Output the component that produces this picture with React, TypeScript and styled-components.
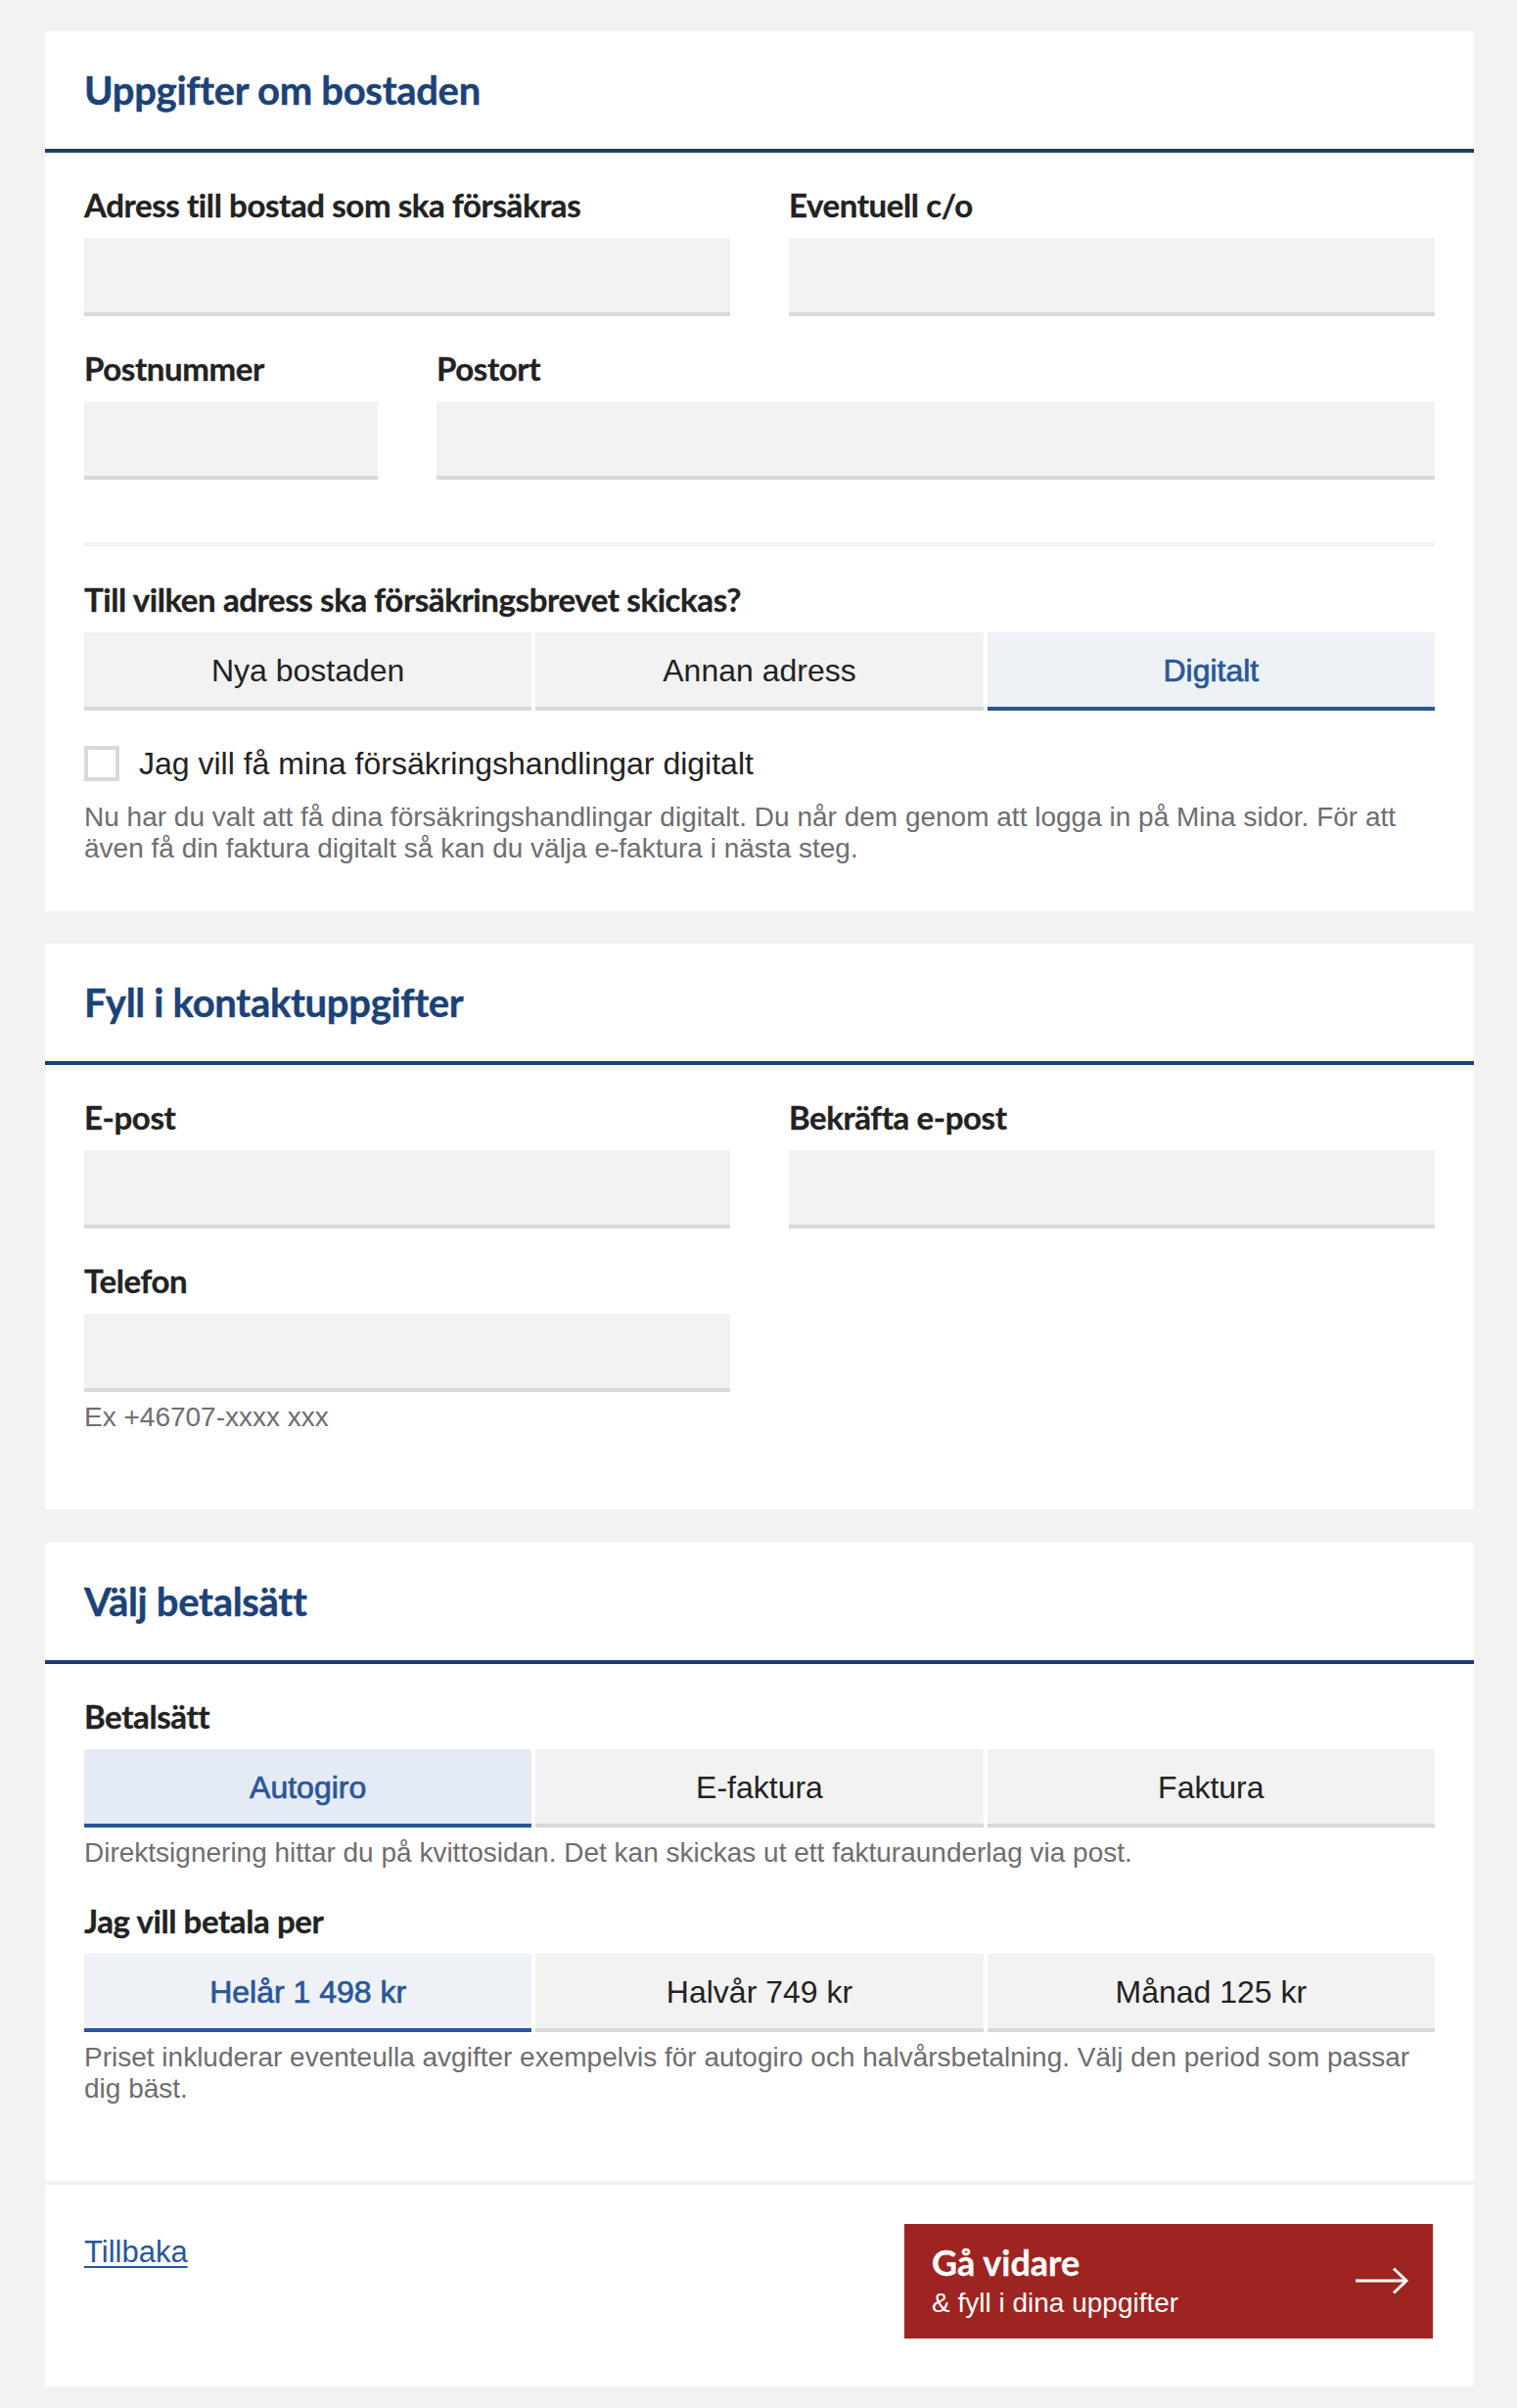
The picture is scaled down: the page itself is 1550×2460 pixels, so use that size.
import React from "react";
import styled, { createGlobalStyle } from "styled-components";

const GlobalStyle = createGlobalStyle`
  html, body {
    margin: 0;
    padding: 0;
    background: #f2f2f2;
  }
  body {
    font-family: "Liberation Sans", Arial, sans-serif;
    color: #222;
  }
  * { box-sizing: border-box; }
`;

const Page = styled.main`
  display: flex;
  flex-direction: column;
  padding: 32px 44px 22px 46px;
`;

const Card = styled.section<{ $gap: number }>`
  background: #fff;
  margin-top: ${(p) => p.$gap}px;
`;

const CardHeader = styled.header`
  height: 124px;
  padding: 0 40px;
  display: flex;
  align-items: center;
  border-bottom: 4px solid #1b3e72;
`;

const Title = styled.h2`
  margin: 0;
  font-family: Lato, "Open Sans", sans-serif;
  font-weight: 700;
  font-size: 40px;
  line-height: 48px;
  letter-spacing: -0.3px;
  color: #1b4279;
  -webkit-text-stroke: 0.4px #1b4279;
`;

const CardBody = styled.div<{ $pb: number }>`
  display: flex;
  flex-direction: column;
  padding: 33px 40px ${(p) => p.$pb}px;
`;

const Rows = styled.div`
  display: flex;
  flex-direction: column;
  gap: 33px;
`;

const FieldRow = styled.div<{ $cols: string }>`
  display: grid;
  grid-template-columns: ${(p) => p.$cols};
  column-gap: 60px;
`;

const Field = styled.div`
  display: flex;
  flex-direction: column;
`;

const Label = styled.label`
  display: block;
  font-family: Lato, "Open Sans", sans-serif;
  font-weight: 700;
  font-size: 33px;
  line-height: 40px;
  letter-spacing: -0.4px;
  color: #222;
  -webkit-text-stroke: 0.3px #222;
  margin-bottom: 14px;
`;

const Input = styled.input`
  display: block;
  width: 100%;
  height: 80px;
  margin: 0;
  padding: 0 20px;
  border: 0;
  border-radius: 0;
  border-bottom: 4px solid #d9d9d9;
  background: #f2f2f2;
  font-family: "Liberation Sans", Arial, sans-serif;
  font-size: 28px;
  color: #222;
  outline: none;
`;

const Separator = styled.hr`
  border: 0;
  height: 4px;
  background: #f2f2f2;
  margin: 64px 0 34px;
`;

const Segmented = styled.div`
  display: grid;
  grid-template-columns: repeat(3, 1fr);
  gap: 4px;
`;

const Segment = styled.button<{ $active?: boolean; $tone?: string }>`
  height: 80px;
  margin: 0;
  padding: 2px 0 0;
  border: 0;
  border-radius: 0;
  border-bottom: 4px solid ${(p) => (p.$active ? "#2a5699" : "#d9d9d9")};
  background: ${(p) => (p.$active ? p.$tone || "#eef2f7" : "#f2f2f2")};
  color: ${(p) => (p.$active ? "#2a5699" : "#222")};
  -webkit-text-stroke: ${(p) => (p.$active ? "0.7px #2a5699" : "0")};
  font-family: "Liberation Sans", Arial, sans-serif;
  font-size: 32px;
  font-weight: 400;
  cursor: pointer;
`;

const CheckRow = styled.label`
  display: flex;
  align-items: center;
  gap: 20px;
  margin-top: 36px;
  font-family: "Liberation Sans", Arial, sans-serif;
  font-size: 32px;
  line-height: 36px;
  color: #222;
`;

const CheckBox = styled.span`
  flex: none;
  width: 36px;
  height: 36px;
  border: 4px solid #d9d9d9;
  background: #fff;
`;

const Help = styled.p<{ $mt: number }>`
  margin: ${(p) => p.$mt}px 0 0;
  font-family: "Liberation Sans", Arial, sans-serif;
  font-size: 28px;
  line-height: 32px;
  color: #6e6e70;
`;

const Footer = styled.footer`
  background: #fff;
  margin-top: 4px;
  display: flex;
  justify-content: space-between;
  align-items: flex-start;
  padding: 40px 42px 49px 40px;
`;

const BackLink = styled.a`
  margin-top: 11px;
  font-family: "Liberation Sans", Arial, sans-serif;
  font-size: 31px;
  line-height: 36px;
  color: #2a5699;
  text-decoration: underline;
  text-decoration-thickness: 2px;
  text-underline-offset: 4px;
`;

const NextButton = styled.button`
  width: 540px;
  height: 117px;
  margin: 0;
  border: 0;
  border-radius: 0;
  background: #9e2421;
  color: #fff;
  display: flex;
  align-items: center;
  justify-content: space-between;
  padding: 0 24px 2px 28px;
  text-align: left;
  cursor: pointer;
`;

const NextText = styled.span`
  display: flex;
  flex-direction: column;
  gap: 6px;
`;

const NextTitle = styled.span`
  font-family: Lato, "Open Sans", sans-serif;
  font-weight: 700;
  font-size: 36px;
  line-height: 40px;
  -webkit-text-stroke: 0.3px #fff;
`;

const NextSub = styled.span`
  font-family: "Liberation Sans", Arial, sans-serif;
  font-size: 28px;
  line-height: 32px;
`;

const Arrow = () => (
  <svg width="56" height="28" viewBox="0 0 56 28" fill="none" aria-hidden="true">
    <path d="M1 14H53" stroke="#fff" strokeWidth="3" />
    <path d="M40 1.5L53 14L40 26.5" stroke="#fff" strokeWidth="3" />
  </svg>
);

type Option = { label: string; active?: boolean; tone?: string };

const SegmentGroup = ({ options }: { options: Option[] }) => (
  <Segmented>
    {options.map((o) => (
      <Segment key={o.label} type="button" $active={o.active} $tone={o.tone}>
        {o.label}
      </Segment>
    ))}
  </Segmented>
);

const TextField = ({ label }: { label: string }) => (
  <Field>
    <Label>{label}</Label>
    <Input type="text" aria-label={label} />
  </Field>
);

export default function App() {
  return (
    <>
      <GlobalStyle />
      <Page>
        <Card $gap={0}>
          <CardHeader>
            <Title>Uppgifter om bostaden</Title>
          </CardHeader>
          <CardBody $pb={48}>
            <Rows>
              <FieldRow $cols="1fr 1fr">
                <TextField label="Adress till bostad som ska försäkras" />
                <TextField label="Eventuell c/o" />
              </FieldRow>
              <FieldRow $cols="300px 1fr">
                <TextField label="Postnummer" />
                <TextField label="Postort" />
              </FieldRow>
            </Rows>
            <Separator />
            <Label as="div">Till vilken adress ska försäkringsbrevet skickas?</Label>
            <SegmentGroup
              options={[
                { label: "Nya bostaden" },
                { label: "Annan adress" },
                { label: "Digitalt", active: true, tone: "#eef2f7" },
              ]}
            />
            <CheckRow>
              <CheckBox />
              Jag vill få mina försäkringshandlingar digitalt
            </CheckRow>
            <Help $mt={21}>
              Nu har du valt att få dina försäkringshandlingar digitalt. Du når dem genom att logga in
              på Mina sidor. För att även få din faktura digitalt så kan du välja e-faktura i nästa steg.
            </Help>
          </CardBody>
        </Card>

        <Card $gap={33}>
          <CardHeader>
            <Title>Fyll i kontaktuppgifter</Title>
          </CardHeader>
          <CardBody $pb={78}>
            <Rows>
              <FieldRow $cols="1fr 1fr">
                <TextField label="E-post" />
                <TextField label="Bekräfta e-post" />
              </FieldRow>
              <FieldRow $cols="1fr 1fr">
                <Field>
                  <Label>Telefon</Label>
                  <Input type="tel" aria-label="Telefon" />
                  <Help $mt={10}>Ex +46707-xxxx xxx</Help>
                </Field>
              </FieldRow>
            </Rows>
          </CardBody>
        </Card>

        <Card $gap={34}>
          <CardHeader>
            <Title>Välj betalsätt</Title>
          </CardHeader>
          <CardBody $pb={78}>
            <Rows>
              <div>
                <Label as="div">Betalsätt</Label>
                <SegmentGroup
                  options={[
                    { label: "Autogiro", active: true, tone: "#e4ebf4" },
                    { label: "E-faktura" },
                    { label: "Faktura" },
                  ]}
                />
                <Help $mt={10}>
                  Direktsignering hittar du på kvittosidan. Det kan skickas ut ett fakturaunderlag via post.
                </Help>
              </div>
              <div>
                <Label as="div">Jag vill betala per</Label>
                <SegmentGroup
                  options={[
                    { label: "Helår 1 498 kr", active: true, tone: "#eef2f7" },
                    { label: "Halvår 749 kr" },
                    { label: "Månad 125 kr" },
                  ]}
                />
                <Help $mt={10}>
                  Priset inkluderar eventeulla avgifter exempelvis för autogiro och halvårsbetalning. Välj
                  den period som passar dig bäst.
                </Help>
              </div>
            </Rows>
          </CardBody>
        </Card>

        <Footer>
          <BackLink href="#">Tillbaka</BackLink>
          <NextButton type="button">
            <NextText>
              <NextTitle>Gå vidare</NextTitle>
              <NextSub>&amp; fyll i dina uppgifter</NextSub>
            </NextText>
            <Arrow />
          </NextButton>
        </Footer>
      </Page>
    </>
  );
}
